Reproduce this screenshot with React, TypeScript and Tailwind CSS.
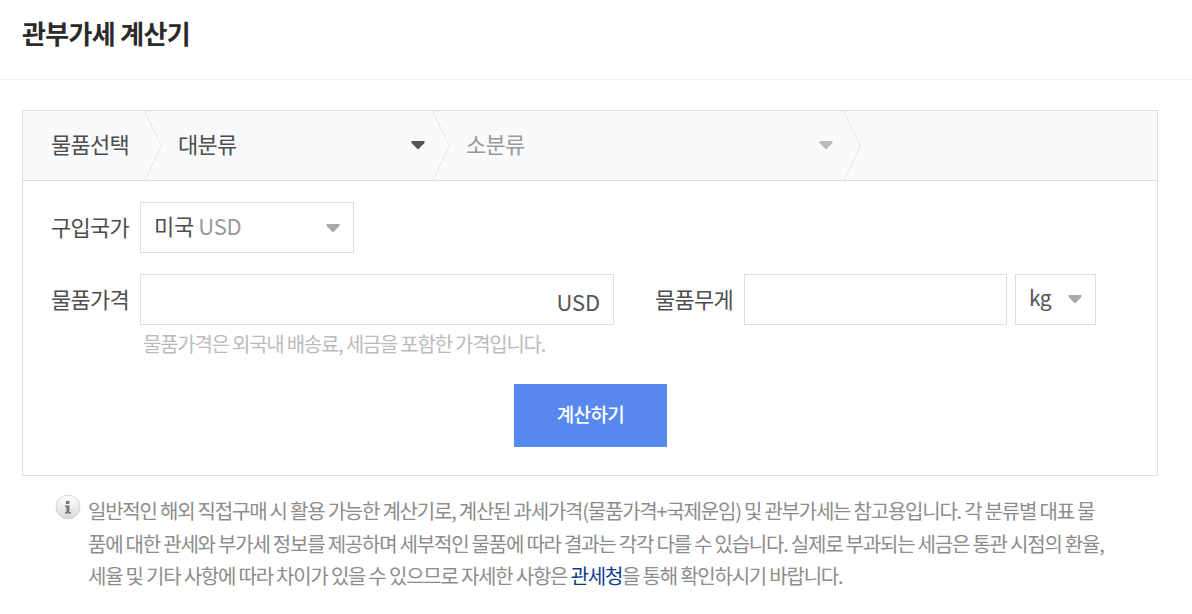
import { ReactNode } from "react";

const font = '[font-family:"Noto_Sans_CJK_KR",sans-serif]';

function Caret({ className }: { className: string }) {
  return (
    <svg width="14" height="10" viewBox="0 0 14 10" className={className}>
      <path d="M0.5 1H13.5V3L7 9.5L0.5 3Z" fill="currentColor" />
    </svg>
  );
}

function Chevron() {
  return (
    <svg width="18" height="70" viewBox="0 0 18 70" className="shrink-0">
      <path d="M0.5 0L17.5 35L0.5 70" fill="none" stroke="#e3e5ea" strokeWidth="1" />
    </svg>
  );
}

function Label({ children, className = "" }: { children: ReactNode; className?: string }) {
  return <span className={`text-[22px] leading-none tracking-[-0.7px] text-[#4d4d4d] ${className}`}>{children}</span>;
}

export default function App() {
  return (
    <div className={`w-[1192px] h-[614px] overflow-hidden bg-white ${font}`}>
      <div className="h-[80px] border-b border-[#eeeeee] pl-[22px] pt-[14px]">
        <h1 className="text-[26px] leading-[38px] font-bold tracking-[-0.65px] text-[#2a2a2a]">관부가세 계산기</h1>
      </div>

      <div className="ml-[22px] mt-[30px] h-[366px] w-[1136px] border border-[#dddddd]">
        <div className="flex h-[70px] items-center border-b border-[#dddddd] bg-[#f9fafc] pl-[28px]">
          <Label className="w-[93px] pb-[5px]">물품선택</Label>
          <Chevron />
          <div className="flex w-[270px] items-center justify-between pl-[16px] pr-[7px]">
            <Label className="pb-[5px]">대분류</Label>
            <Caret className="mb-[2px] text-[#555]" />
          </div>
          <Chevron />
          <div className="flex w-[393px] items-center justify-between pl-[16px] pr-[10px]">
            <Label className="pb-[5px] text-[#999]">소분류</Label>
            <Caret className="mb-[2px] text-[#bbb]" />
          </div>
          <Chevron />
        </div>

        <div className="pl-[28px] pt-[21px]">
          <div className="flex items-center">
            <Label className="w-[89px] pb-[4px]">구입국가</Label>
            <div className="flex h-[51px] w-[214px] items-center justify-between border border-[#dddddd] pl-[13px] pr-[13px]">
              <span className="pb-[4px] text-[22px] tracking-[-0.35px] text-[#4d4d4d]">
                미국 <span className="text-[#999]">USD</span>
              </span>
              <Caret className="text-[#aaa]" />
            </div>
          </div>

          <div className="mt-[21px] flex items-center">
            <Label className="w-[89px] pb-[4px]">물품가격</Label>
            <div className="flex h-[51px] w-[474px] items-end justify-end border border-[#dddddd] pb-[8px] pr-[13px]">
              <span className="text-[22px] leading-[30px] tracking-[-0.1px] text-[#555]">USD</span>
            </div>
            <Label className="ml-[41px] w-[89px] pb-[4px]">물품무게</Label>
            <div className="h-[51px] w-[263px] border border-[#dddddd]" />
            <div className="ml-[8px] flex h-[51px] w-[81px] items-center justify-between border border-[#dddddd] pl-[13px] pr-[13px]">
              <span className="pb-[4px] text-[21px] tracking-[-0.6px] text-[#555]">kg</span>
              <Caret className="mb-[2px] text-[#aaa]" />
            </div>
          </div>

          <p className="ml-[92px] mt-[5px] text-[20px] leading-[28px] tracking-[-1.25px] text-[#bbbbbb]">
            물품가격은 외국내 배송료, 세금을 포함한 가격입니다.
          </p>

          <div className="mt-[26px] flex justify-center pr-[27px]">
            <button className="h-[63px] w-[153px] bg-[#5788ee] pb-[2px] text-[19px] font-medium tracking-[-0.6px] text-white">
              계산하기
            </button>
          </div>
        </div>
      </div>

      <div className="flex pl-[55px] pt-[17px]">
        <svg width="26" height="26" viewBox="0 0 26 26" className="mt-[1px] shrink-0">
          <defs>
            <linearGradient id="infoFill" x1="0" y1="0" x2="0" y2="1">
              <stop offset="0" stopColor="#ffffff" />
              <stop offset="1" stopColor="#d8d8d8" />
            </linearGradient>
          </defs>
          <circle cx="13" cy="13" r="12" fill="url(#infoFill)" stroke="#d5d5d5" />
          <path d="M11 7h3.4v3H11zM10 11.5h4.4v6.5H16v1.6H10V18h1.4v-4.9H10z" fill="#777" />
        </svg>
        <div className="ml-[7px] mt-[2px] text-[20px] leading-[32.5px] tracking-[-1.22px] text-[#8c8c8c] whitespace-nowrap">
          <p>일반적인 해외 직접구매 시 활용 가능한 계산기로, 계산된 과세가격(물품가격+국제운임) 및 관부가세는 참고용입니다. 각 분류별 대표 물</p>
          <p>품에 대한 관세와 부가세 정보를 제공하며 세부적인 물품에 따라 결과는 각각 다를 수 있습니다. 실제로 부과되는 세금은 통관 시점의 환율,</p>
          <p>
            세율 및 기타 사항에 따라 차이가 있을 수 있으므로 자세한 사항은 <span className="text-[#0b3c8c]">관세청</span>을 통해 확인하시기 바랍니다.
          </p>
        </div>
      </div>
    </div>
  );
}
